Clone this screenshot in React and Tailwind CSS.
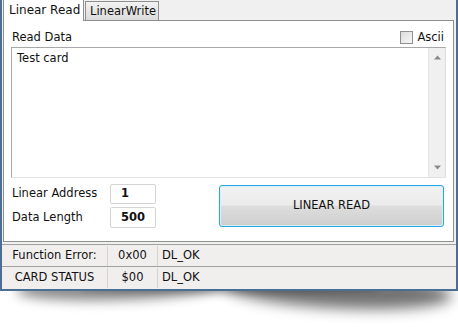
import React from 'react';

const font = { fontFamily: '"DejaVu Sans", Verdana, sans-serif' };

const ScrollArrow = ({ down }) => (
  <svg width="9" height="5" viewBox="0 0 9 5" className="block">
    {down ? <path d="M1 0.5 L8 0.5 L4.5 4.5 Z" fill="#8a8a8a" /> : <path d="M4.5 0.5 L8 4.5 L1 4.5 Z" fill="#8a8a8a" />}
  </svg>
);

const StatusRow = ({ label, code, text, last }) => (
  <div className={`flex items-center pt-[1px] ${last ? 'h-[21px]' : 'h-[22px] border-b border-[#a0a0a0]'}`}>
    <div className="w-[106px] h-full flex items-center justify-center border-r border-[#d6d2d2]">{label}</div>
    <div className="w-[50px] h-full flex items-center justify-center border-r border-[#d6d2d2]">{code}</div>
    <div className="pl-[4px]">{text}</div>
  </div>
);

export default function App() {
  return (
    <div className="relative w-[458px] h-[327px] bg-white overflow-hidden text-[11.5px] text-[#111]" style={font}>
      {/* curled shadow under the window */}
      <div className="absolute left-[16px] top-[274px] w-[210px] h-[26px] rounded-[50%] bg-black/45 blur-[6px] rotate-[-2deg]" />
      <div className="absolute right-[6px] top-[272px] w-[230px] h-[36px] rounded-[50%] bg-black/55 blur-[7px] rotate-[3deg]" />
      <div className="absolute left-[80px] right-[80px] top-[284px] h-[10px] rounded-[50%] bg-black/20 blur-[3px]" />

      <div className="relative z-10 w-[458px] h-[291px] bg-[#f0f0f0] border-l-2 border-r-2 border-b-2 border-[#4b6f93] flex flex-col">
        {/* tabs */}
        <div className="h-[20px] flex items-end pl-[1px]">
          <div className="relative z-10 h-[21px] w-[81px] -mb-px bg-white border-l border-r border-[#8e8f8f] flex items-center pl-[5px] pb-[2px] text-[12px]">
            Linear Read
          </div>
          <div className="h-[19px] w-[74px] ml-px bg-gradient-to-b from-[#f2f2f2] to-[#dcdcdc] border border-b-0 border-[#8e8f8f] flex items-center pl-[4px] pt-[1px] text-[11.5px]">
            LinearWrite
          </div>
        </div>

        {/* tab panel */}
        <div className="ml-[1px] w-[451px] h-[222px] bg-white border border-[#8e8f8f] px-[7px] pt-[8px]">
          <div className="flex items-center justify-between h-[17px]">
            <span className="pl-[1px]">Read Data</span>
            <label className="flex items-center gap-[4px] pr-[2px]">
              <span className="w-[13px] h-[13px] border border-[#8f8f8f] bg-gradient-to-br from-[#dcdcdc] to-[#f8f8f8]" />
              <span>Ascii</span>
            </label>
          </div>
          <div className="mt-[1px] w-[435px] h-[131px] border border-[#a8a8a8] border-r-[#dcdcdc] border-b-[#e3e3e3] flex">
            <div className="flex-1 pl-[5px] pt-[2px]">Test card</div>
            <div className="w-[17px] h-full bg-[#f0f0f0] border-l border-[#e6e6e6] flex flex-col items-center justify-between py-[7px]">
              <ScrollArrow />
              <ScrollArrow down />
            </div>
          </div>

          <div className="mt-[6px] flex">
            <div className="flex flex-col gap-[3px] w-[208px]">
              <div className="flex items-center h-[20px]">
                <span className="w-[99px] pl-[1px]">Linear Address</span>
                <div className="w-[46px] h-[20px] border border-[#d4d4d4] rounded-[2px] flex items-center pl-[10px] font-bold">1</div>
              </div>
              <div className="flex items-center h-[21px]">
                <span className="w-[99px] pl-[1px]">Data Length</span>
                <div className="w-[46px] h-[21px] border border-[#d4d4d4] rounded-[2px] flex items-center pl-[10px] font-bold">500</div>
              </div>
            </div>
            <button className="mt-[1px] w-[225px] h-[42px] rounded-[3px] border border-[#26a8e6] shadow-[inset_0_0_0_1px_#d8f0fb] bg-[linear-gradient(to_bottom,#f2f2f2_0%,#ebebeb_48%,#dddddd_50%,#cfcfcf_100%)] flex items-center justify-center text-[11.5px] text-[#111]" style={font}>
              LINEAR READ
            </button>
          </div>
        </div>

        {/* status area */}
        <div className="mt-[2px] flex-1 bg-[#f1eeee] border-t border-[#a0a0a0]">
          <StatusRow label="Function Error:" code="0x00" text="DL_OK" />
          <StatusRow label="CARD STATUS" code="$00" text="DL_OK" last />
        </div>
      </div>
    </div>
  );
}
